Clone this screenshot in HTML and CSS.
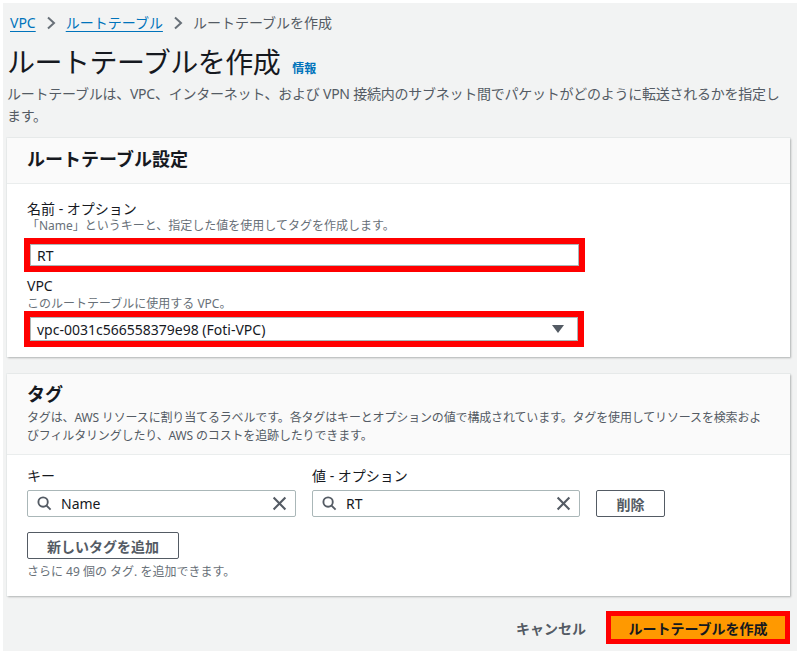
FILE: index.html
```html
<!DOCTYPE html>
<html lang="ja">
<head>
<meta charset="utf-8">
<link rel="stylesheet" href="styles.css">
</head>
<body>
<div class="page">
  <nav class="crumbs">
    <a class="crumb-link">VPC</a>
    <svg class="chev" viewBox="0 0 10 14" width="10" height="14"><path d="M2 1.5 L8 7 L2 12.5" fill="none" stroke="#687078" stroke-width="2"/></svg>
    <a class="crumb-link">ルートテーブル</a>
    <svg class="chev" viewBox="0 0 10 14" width="10" height="14"><path d="M2 1.5 L8 7 L2 12.5" fill="none" stroke="#687078" stroke-width="2"/></svg>
    <span class="crumb-cur">ルートテーブルを作成</span>
  </nav>
  <div class="title-row">
    <h1 class="title">ルートテーブルを作成</h1>
    <a class="info">情報</a>
  </div>
  <p class="page-desc">ルートテーブルは、VPC、インターネット、および VPN 接続内のサブネット間でパケットがどのように転送されるかを指定します。</p>

  <section class="card card-settings">
    <header class="card-head">
      <h2 class="card-title">ルートテーブル設定</h2>
    </header>
    <div class="card-body">
      <div class="label">名前 - オプション</div>
      <div class="hint">「Name」というキーと、指定した値を使用してタグを作成します。</div>
      <div class="mark mark-name">
        <div class="field">RT</div>
      </div>
      <div class="label label-vpc">VPC</div>
      <div class="hint hint-vpc">このルートテーブルに使用する VPC。</div>
      <div class="mark mark-vpc">
        <div class="field select">
          <span>vpc-0031c566558379e98 (Foti-VPC)</span>
          <svg class="caret" viewBox="0 0 12 8" width="12" height="8"><path d="M0 0 H12 L6 8 Z" fill="#545b64"/></svg>
        </div>
      </div>
    </div>
  </section>

  <section class="card card-tags">
    <header class="card-head tags-head">
      <h2 class="card-title">タグ</h2>
      <p class="card-desc">タグは、AWS リソースに割り当てるラベルです。各タグはキーとオプションの値で構成されています。タグを使用してリソースを検索およびフィルタリングしたり、AWS のコストを追跡したりできます。</p>
    </header>
    <div class="card-body tags-body">
      <div class="tag-grid">
        <div class="label">キー</div>
        <div class="label">値 - オプション</div>
        <div></div>
        <div class="search">
          <svg class="mag" viewBox="0 0 16 16" width="15" height="15"><circle cx="6.5" cy="6.5" r="5" fill="none" stroke="#545b64" stroke-width="2"/><path d="M10.2 10.2 L14.5 14.5" stroke="#545b64" stroke-width="2"/></svg>
          <span class="search-text">Name</span>
          <svg class="clear" viewBox="0 0 14 14" width="15" height="15"><path d="M1.5 1.5 L12.5 12.5 M12.5 1.5 L1.5 12.5" stroke="#545b64" stroke-width="2"/></svg>
        </div>
        <div class="search">
          <svg class="mag" viewBox="0 0 16 16" width="15" height="15"><circle cx="6.5" cy="6.5" r="5" fill="none" stroke="#545b64" stroke-width="2"/><path d="M10.2 10.2 L14.5 14.5" stroke="#545b64" stroke-width="2"/></svg>
          <span class="search-text">RT</span>
          <svg class="clear" viewBox="0 0 14 14" width="15" height="15"><path d="M1.5 1.5 L12.5 12.5 M12.5 1.5 L1.5 12.5" stroke="#545b64" stroke-width="2"/></svg>
        </div>
        <button class="btn btn-del">削除</button>
      </div>
      <button class="btn btn-add">新しいタグを追加</button>
      <div class="hint hint-more">さらに 49 個の タグ. を追加できます。</div>
    </div>
  </section>

  <div class="actions">
    <button class="btn-cancel">キャンセル</button>
    <button class="btn-create">ルートテーブルを作成</button>
  </div>
</div>
</body>
</html>
```

FILE: styles.css
```css
* { box-sizing: border-box; }
html, body { margin: 0; padding: 0; background: #ffffff; }
body {
  font-family: "Noto Sans", "Noto Sans CJK JP", sans-serif;
  color: #16191f;
  font-size: 14px;
}
.page {
  margin: 3px;
  height: 648px;
  background: #f2f3f3;
  padding: 11px 7px 0 4px;
}
.crumbs {
  display: flex;
  align-items: center;
  gap: 10px;
  font-size: 14px;
  line-height: 18px;
  padding-left: 3px;
}
.crumb-link {
  color: #0073bb;
  text-decoration: underline;
  text-underline-offset: 3px;
}
.crumb-cur { color: #545b64; }
.chev { display: block; }
.title-row {
  display: flex;
  align-items: baseline;
  gap: 12px;
  margin-top: 12px;
}
.title {
  margin: 0;
  font-size: 28px;
  font-weight: 400;
  line-height: 36px;
  letter-spacing: -0.5px;
}
.info {
  color: #0073bb;
  font-size: 12px;
  font-weight: 700;
}
.page-desc {
  margin: 3px 0 0 0;
  color: #545b64;
  font-size: 14px;
  line-height: 22px;
  letter-spacing: -0.25px;
}
.card {
  background: #ffffff;
  box-shadow: 1px 1px 2px rgba(0,0,0,0.25), 0 0 0 1px #eaeded;
}
.card-settings { margin-top: 11px; }
.card-head {
  background: #fafafa;
  border-bottom: 1px solid #eaeded;
  padding: 9px 20px 12px 20px;
}
.card-title {
  margin: 0;
  font-size: 18px;
  font-weight: 700;
  line-height: 24px;
}
.card-body { padding: 16px 20px 10px 20px; }
.label {
  font-size: 14px;
  line-height: 18px;
}
.hint {
  font-size: 12px;
  line-height: 15px;
  color: #687078;
}
.mark {
  border: 6px solid #ff0000;
  margin: 5px 0 0 -3px;
  width: 561px;
}
.field {
  height: 22px;
  border: 1px solid #aab7b8;
  background: #fff;
  padding: 0 6px;
  display: flex;
  align-items: center;
  font-size: 14px;
}
.label-vpc { margin-top: 5px; }
.hint-vpc { margin-top: 1px; }
.mark-vpc { margin-top: 0; width: 560px; }
.mark-vpc .field { height: 24px; justify-content: space-between; padding-right: 13px; }
.caret { display: block; }

.card-tags { margin-top: 17px; }
.tags-head { padding: 8px 20px 9px 20px; }
.card-desc {
  margin: 3px 0 0 0;
  font-size: 12px;
  line-height: 18px;
  color: #545b64;
  letter-spacing: -0.15px;
}
.tags-body { padding: 12px 20px 17px 20px; }
.tag-grid {
  display: grid;
  grid-template-columns: 269px 268px 69px;
  column-gap: 16px;
  row-gap: 5px;
  align-items: end;
}
.search {
  height: 27px;
  border: 1px solid #aab7b8;
  border-radius: 2px;
  display: flex;
  align-items: center;
  padding: 0 8px 0 9px;
  gap: 9px;
}
.mag { display: block; flex: none; }
.search-text { flex: 1; font-size: 14px; }
.clear { display: block; flex: none; }
.btn {
  font-family: inherit;
  background: #fff;
  border: 1px solid #545b64;
  border-radius: 2px;
  color: #545b64;
  font-weight: 700;
  font-size: 14px;
  height: 27px;
  padding: 0;
}
.btn-del { width: 69px; }
.btn-add {
  margin-top: 15px;
  width: 152px;
  display: block;
}
.hint-more { margin-top: 5px; }

.actions {
  display: flex;
  justify-content: flex-end;
  align-items: center;
  gap: 20px;
  margin-top: 15px;
  padding-right: 0;
}
.btn-cancel {
  font-family: inherit;
  background: none;
  border: none;
  color: #545b64;
  font-weight: 700;
  font-size: 14px;
  padding: 0;
}
.btn-create {
  font-family: inherit;
  background: #ff9900;
  border: 5px solid #ff0000;
  color: #16191f;
  font-weight: 700;
  font-size: 14px;
  width: 184px;
  height: 33px;
  padding: 0;
}
```
